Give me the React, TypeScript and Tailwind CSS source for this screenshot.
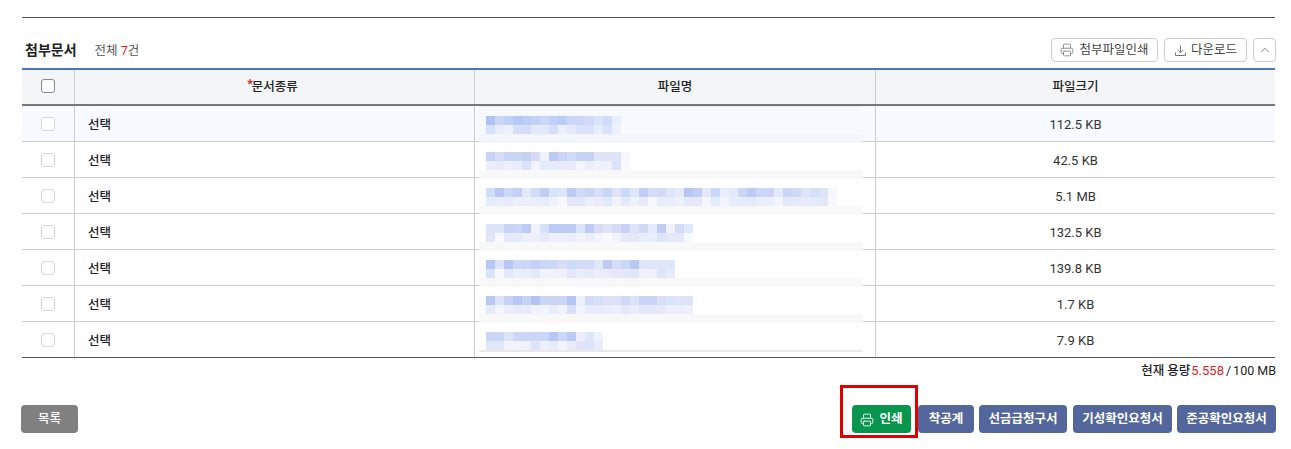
import { Printer, ChevronUp } from "lucide-react";

const font = { fontFamily: 'Roboto, "Noto Sans CJK KR", sans-serif' };

type Row = { first: string; top: string[]; bottom: string[]; };

const rows: Row[] = [
  {
    first: "#f5f8fe",
    top: "b0c4f4 ced6f6 c2cff6 b8c8f6 bccdf6 c4d0f6 cbd6f8 bfcff8 bccdf8 ced6f8 cdd6f8 d4d9f8 d8e4fa d2dcf8 e8eefc".split(" "),
    bottom: "d8e2fc e8ecfb eef1fd d4dff9 d2def9 e2eafb e2e9fb d4dff9 eaf0fc e4e9fb d8e2fb d8e2fb e4eefc d8e2fa ecf1fc".split(" "),
  },
  {
    first: "#ffffff",
    top: "c8d4f6 d6dcf6 cad6f7 cbd6f6 c6d2f4 d8daf6 eef2fb bccbf6 cbd2f5 cfdcf8 c7d3f5 c7d3f5 dfe5f8 e0e4f8 dfe5f9 f5f7fc".split(" "),
    bottom: "ebeefb e6ebfa ecf0fc e8ecfb d9e3fb f3f3fd e4ebfb e4ebfb e6ebfa e8ebfa f3f6fd ebeefb f1f3fc eef0fb dce2f9 f8f9fe".split(" "),
  },
  {
    first: "#fafbfe",
    top: "d0def9 b8c8f4 ccd8f7 c4cff5 e2eafb d0dcf8 c0cef6 d8e4fb dfe6f9 bccbf6 d2daf6 cbd6f5 d8def7 c8d6f7 e0e2f8 cbdaf8 dfe7f9 c0cef5 d5dcf6 d2daf6 e0e6f9 e6ebfa b6c5f4 c0cdf6 e6e8f9 c8d8f8 e8eefb e4eafa cbd6f7 bccbf6 cbd6f7 cbd6f7 e2eafb cad4f6 cfd9f6 dfe5f9 d4e0f9 dee3f8 f5f7fd".split(" "),
    bottom: "e6ecfa e8edfa e6eafa ecf0fb ebeffb eaedfa e8ecfa eef2fc f8f9fe e2e8fa e2e8fa ecf0fb eaeafa dfe9fa f1f2fc e3ebfa edf2fc e6e9f8 f6f8fd e9edfb e8edfb ecf0fb e4e9fa e4e9fa f5f6fd e2ebfb f3f5fd e8edfb e6ebfa e4e9f9 e8edfa ebeffb f3f5fd e4e9f9 e4eafa e6eafa e4eafa e2e8f9 f8f9fe".split(" "),
  },
  {
    first: "#ffffff",
    top: "dde3f9 dde3f9 c8d4f6 cbd6f7 bccdf5 f0f2fc d6e2fa bccbf6 bccbf6 bccbf6 dbe5fa bccaf4 d8dcf7 dfe4f9 d6dcf7 c8d2f5 dde3f9 d0daf8 e6ecfb c0cdf5 f0f3fc d4daf7 dce8fb".split(" "),
    bottom: "e2e6fa f8f9fe e4eafb e4eafb ecf0fb eeeffb e6e9f9 eef0fb eef0fb ebeefb f0f2fc eceffa f3f4fd f9fafe f1f4fc e6e9f9 e4e8f8 ebeffc e8eefb dfe5f9 e4e8f9 e4e8f9 f5fafe".split(" "),
  },
  {
    first: "#fafbfe",
    top: "b8c8f6 dde3f9 b8c8f6 ccd8f7 cbd6f7 c6d0f5 c8d6f7 cbd8f8 dcdcf7 cbdcf9 d4daf7 d4daf7 dfe8fa c0cbf4 d6def9 cbd8f8 bac8f4 dfe6f9 dfe6f9 dfe6f9 dde7fa".split(" "),
    bottom: "d8e4fb f8f9fe e2e9fb eaf0fb e8edfa e2eafa f0f2fc f0f1fb f0f1fb e4e7f8 e8edfb e7e9f9 ecedfa eaebfa e6e8f9 e4e9f9 e3e6f7 eff2fc eef1fb e0e4f8 e6eafb".split(" "),
  },
  {
    first: "#fafbfe",
    top: "b8c8f5 dde2f8 c8d2f6 b8c6f4 c6d3f6 b5c3f3 c8d6f7 ccd4f6 ccd4f6 b6c6f3 eef0fb d4dbf7 d4e0f9 dde2f8 dde2f8 d0d9f7 dbe4fa c9d6f7 c9d6f7 dadff7 d8e4fb e0e4f9 e0e4f9".split(" "),
    bottom: "e4eafb f3f6fd ebeffb e6ebfa e6ebfa f0f3fc f2f5fd e8ecfb f0f2fc d8dff8 f3f5fd e7ecfa e6ebfa e9edfb ebeefb e4e8f9 e8eefb e2e8fb e2e8fb e4e8f9 ebf0fc eaeefb ebf0fc".split(" "),
  },
  {
    first: "#ffffff",
    top: "cbd6f7 cad5f6 dde3f8 d0d6f6 c8d5f6 d0d4f4 c9d6f7 b6c6f5 cbd8f8 bccbf5 eeeffb dfe6f9 eef2fc".split(" "),
    bottom: "e2e6f9 e2e6f9 f3f3fd f0f3fc eef2fc e0e3f7 edf0fb e8ecfa f2f4fc e8ebf9 e1e3f7 dce4f9 e8ecfa".split(" "),
  },
];

const tableRows = [
  "112.5 KB", "42.5 KB", "5.1 MB", "132.5 KB", "139.8 KB", "1.7 KB", "7.9 KB",
];

function DownloadIcon() {
  return (
    <svg width="13" height="13" viewBox="0 0 13 13" fill="none" stroke="#777" strokeWidth="1">
      <path d="M6.5 1.5v7M3.8 6l2.7 2.7L9.2 6M1.5 8.5v3h10v-3" />
    </svg>
  );
}

function Blur({ row }: { row: Row }) {
  return (
    <div className="flex flex-col">
      <div className="flex h-[9px]">
        <div className="w-[7px]" style={{ background: row.first }} />
        {row.top.map((c, i) => (
          <div key={i} className="w-[9px]" style={{ background: `#${c}` }} />
        ))}
      </div>
      <div className="flex h-[9px]">
        <div className="w-[7px]" style={{ background: row.first }} />
        {row.bottom.map((c, i) => (
          <div key={i} className="w-[9px]" style={{ background: `#${c}` }} />
        ))}
      </div>
    </div>
  );
}

function Checkbox({ head }: { head?: boolean }) {
  return (
    <span
      className={
        head
          ? "block w-[14px] h-[14px] rounded-[3px] bg-white border border-[#888888]"
          : "block w-[14px] h-[14px] rounded-[3px] bg-white border border-[#d6d6d6]"
      }
    />
  );
}

export default function App() {
  return (
    <div className="w-[1291px] h-[449px] bg-white overflow-hidden relative pt-[17px] pl-[22px] pr-[16px] text-[#222222]" style={font}>
      <div className="h-px bg-[#555555]" />

      <div className="h-[50px] flex items-end pb-[6px] relative">
        <div className="flex items-center h-[24px] flex-1">
          <span className="text-[14px] font-bold ml-[3px] leading-none text-[#222222]">첨부문서</span>
          <span className="text-[12.5px] ml-[18px] leading-none text-[#555555] pt-[2px]">
            전체 <span className="text-[#dc1f26]">7</span>건
          </span>
        </div>
        <div className="flex items-center gap-[6px] -mr-px">
          <button className="w-[107px] h-[24px] border border-[#cccccc] rounded-[4px] flex items-center justify-center gap-[5px] text-[12.5px] text-[#444444]">
            <Printer size={14} strokeWidth={1.3} color="#777777" />
            첨부파일인쇄
          </button>
          <button className="w-[83px] h-[24px] border border-[#cccccc] rounded-[4px] flex items-center justify-center gap-[4px] text-[12.5px] text-[#444444]">
            <DownloadIcon />
            다운로드
          </button>
          <button className="w-[23px] h-[24px] border border-[#cccccc] rounded-[4px] flex items-center justify-center">
            <ChevronUp size={14} strokeWidth={1.2} color="#555555" />
          </button>
        </div>
      </div>

      <div className="relative border-t-2 border-[#4a73c9]">
        <div className="grid grid-cols-[53px_400px_401px_1fr] h-[36px] bg-[#f4f5f7] border-b-2 border-[#777777] text-[12.5px] font-medium">
          <div className="border-r border-[#cccccc] flex items-center justify-center pb-[2px]"><Checkbox head /></div>
          <div className="border-r border-[#cccccc] flex items-center justify-center pr-[4px]">
            <span className="text-[#d0202a] font-bold relative -top-[3px] -mr-px">*</span>문서종류
          </div>
          <div className="border-r border-[#cccccc] flex items-center justify-center">파일명</div>
          <div className="flex items-center justify-center">파일크기</div>
        </div>
        {tableRows.map((size, i) => (
          <div
            key={size}
            className={
              (i === 0 ? "bg-[#f6f9fe] " : "bg-white ") +
              (i === 6 ? "border-[#555555] " : "border-[#cccccc] ") +
              "grid grid-cols-[53px_400px_401px_1fr] h-[36px] border-b text-[12.5px]"
            }
          >
            <div className="border-r border-[#cccccc] flex items-center justify-center"><Checkbox /></div>
            <div className="border-r border-[#cccccc] flex items-center pl-[13px] pt-[3px] font-medium">선택</div>
            <div className="border-r border-[#cccccc]" />
            <div className="flex items-center justify-center pt-[3px] text-[13px] text-[#333333]">{size}</div>
          </div>
        ))}

        {/* blurred file names, an image laid over the table */}
        <div className="absolute left-[457px] top-[36px] w-[384px] flex flex-col">
          <div className="h-px bg-[#e6e9ee]" />
          {rows.map((row, i) => (
            <div key={i} className={i === 6 ? "flex flex-col bg-white" : "flex flex-col"}>
              <div className={i === 0 ? "h-[9px] bg-[#f6f9fe]" : "h-[9px] bg-white"} />
              <div className={i === 0 ? "bg-[#f6f9fe]" : "bg-white"}>
                <Blur row={row} />
              </div>
              {i === 6 ? (
                <div className="h-[2px] bg-[#e9e9e9]" />
              ) : (
                <div className={i === 0 ? "h-[9px] bg-[#f2f6fa]" : "h-[9px] bg-[#f8f8f8]"} />
              )}
            </div>
          ))}
        </div>
      </div>

      <div className="flex justify-end items-center h-[24px] pt-[2px] -mr-px text-[12.5px] text-[#222222]">
        <span className="font-medium">현재 용량</span>
        <span className="text-[#dc1f26] text-[13px] ml-[1px]">5.558</span>
        <span className="ml-[2px]">/</span>
        <span className="ml-[2px]">100 MB</span>
      </div>

      <div className="flex justify-between items-center mt-[23px] -mx-px">
        <button className="w-[57px] h-[28px] pt-px rounded-[4px] bg-[#808080] text-white text-[12.5px] font-medium">목록</button>
        <div className="flex gap-[5px]">
          <button className="w-[59px] h-[28px] pt-px rounded-[4px] bg-[#08964f] text-white text-[12.5px] font-bold flex items-center justify-center gap-[5px] mr-[2px]">
            <Printer size={14} strokeWidth={1.5} />
            인쇄
          </button>
          <button className="w-[56px] h-[28px] pt-px rounded-[4px] bg-[#53679d] text-white text-[12.5px] font-bold">착공계</button>
          <button className="w-[88px] h-[28px] pt-px rounded-[4px] bg-[#53679d] text-white text-[12.5px] font-bold">선금급청구서</button>
          <button className="w-[99px] h-[28px] pt-px rounded-[4px] bg-[#53679d] text-white text-[12.5px] font-bold ml-px">기성확인요청서</button>
          <button className="w-[99px] h-[28px] pt-px rounded-[4px] bg-[#53679d] text-white text-[12.5px] font-bold">준공확인요청서</button>
        </div>
      </div>

      {/* red annotation box */}
      <div className="absolute left-[840px] top-[385px] w-[78px] h-[53px] border-[3px] border-[#e00000]" />
    </div>
  );
}
